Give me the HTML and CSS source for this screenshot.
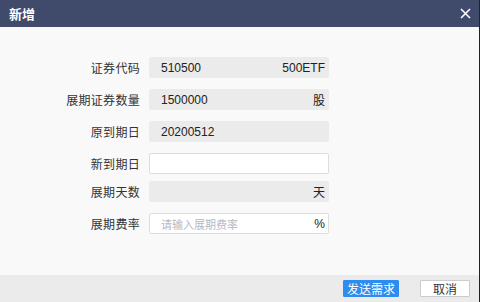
FILE: index.html
```html
<!DOCTYPE html>
<html lang="zh-CN">
  <head>
    <meta charset="UTF-8" />
    <title>新增</title>
    <link rel="stylesheet" href="styles.css">
  </head>
  <body>
    <div class="dialog">
      <header class="dialog-head">
        <span class="dialog-title">新增</span>
        <svg class="close" width="11" height="11" viewBox="0 0 11 11">
          <path d="M1 1L10 10M10 1L1 10" stroke="#ffffff" stroke-width="1.6" fill="none"/>
        </svg>
      </header>

      <section class="dialog-body">
        <div class="row">
          <label>证券代码</label>
          <div class="field readonly"><span>510500</span><span>500ETF</span></div>
        </div>
        <div class="row">
          <label>展期证券数量</label>
          <div class="field readonly"><span>1500000</span><span>股</span></div>
        </div>
        <div class="row">
          <label>原到期日</label>
          <div class="field readonly"><span>20200512</span></div>
        </div>
        <div class="row">
          <label>新到期日</label>
          <div class="field"></div>
        </div>
        <div class="row tight">
          <label>展期天数</label>
          <div class="field readonly"><span></span><span>天</span></div>
        </div>
        <div class="row">
          <label>展期费率</label>
          <div class="field"><span class="placeholder">请输入展期费率</span><span>%</span></div>
        </div>
      </section>

      <footer class="dialog-foot">
        <button class="btn primary">发送需求</button>
        <button class="btn">取消</button>
      </footer>
    </div>
  </body>
</html>
```

FILE: styles.css
```css
html, body {
  margin: 0;
  padding: 0;
}
body {
  font-family: "Noto Sans CJK SC", "Liberation Sans", sans-serif;
  color: #333;
  background: #f9f9f9;
  width: 480px;
  height: 302px;
  overflow: hidden;
}
.dialog {
  height: 302px;
  display: flex;
  flex-direction: column;
  border-right: 1px solid #222;
  box-sizing: border-box;
}
.dialog-head {
  height: 27px;
  background: #404a6b;
  display: flex;
  align-items: center;
  justify-content: space-between;
  padding: 0 8px 0 9px;
  flex-shrink: 0;
}
.dialog-title {
  color: #ffffff;
  font-size: 13px;
  font-weight: bold;
}
.close {
  display: block;
}
.dialog-body {
  flex: 1;
  padding-top: 30px;
}
.row {
  display: flex;
  align-items: center;
  margin-bottom: 11px;
  height: 21px;
}
.row.tight {
  margin-top: -4px;
}
.row label {
  width: 149px;
  flex-shrink: 0;
  text-align: right;
  font-size: 12px;
  color: #333;
  padding-right: 9px;
  box-sizing: border-box;
  letter-spacing: 0.3px;
}
.field {
  width: 180px;
  height: 21px;
  box-sizing: border-box;
  border: 1px solid #dddddd;
  background: #ffffff;
  border-radius: 2px;
  display: flex;
  align-items: center;
  justify-content: space-between;
  padding: 0 3px 0 11px;
  font-family: "Liberation Sans", "Noto Sans CJK SC", sans-serif;
  font-size: 12px;
  color: #222;
}
.field.readonly {
  background: #ebebeb;
  border-color: #ebebeb;
}
.placeholder {
  color: #b5b9c4;
  font-family: "Noto Sans CJK SC", sans-serif;
  font-size: 11px;
}
.dialog-foot {
  height: 27px;
  background: #ebebeb;
  display: flex;
  justify-content: flex-end;
  align-items: flex-start;
  padding: 5px 9px 0 0;
  box-sizing: border-box;
  gap: 21px;
  flex-shrink: 0;
}
.btn {
  font-family: "Noto Sans CJK SC", sans-serif;
  font-size: 12px;
  height: 17px;
  width: 50px;
  padding: 0;
  border: 1px solid #cccccc;
  background: #ffffff;
  color: #333;
  line-height: 15px;
  border-radius: 1px;
}
.btn.primary {
  width: 56px;
  background: #2d8cf0;
  border-color: #2d8cf0;
  color: #ffffff;
}
```
